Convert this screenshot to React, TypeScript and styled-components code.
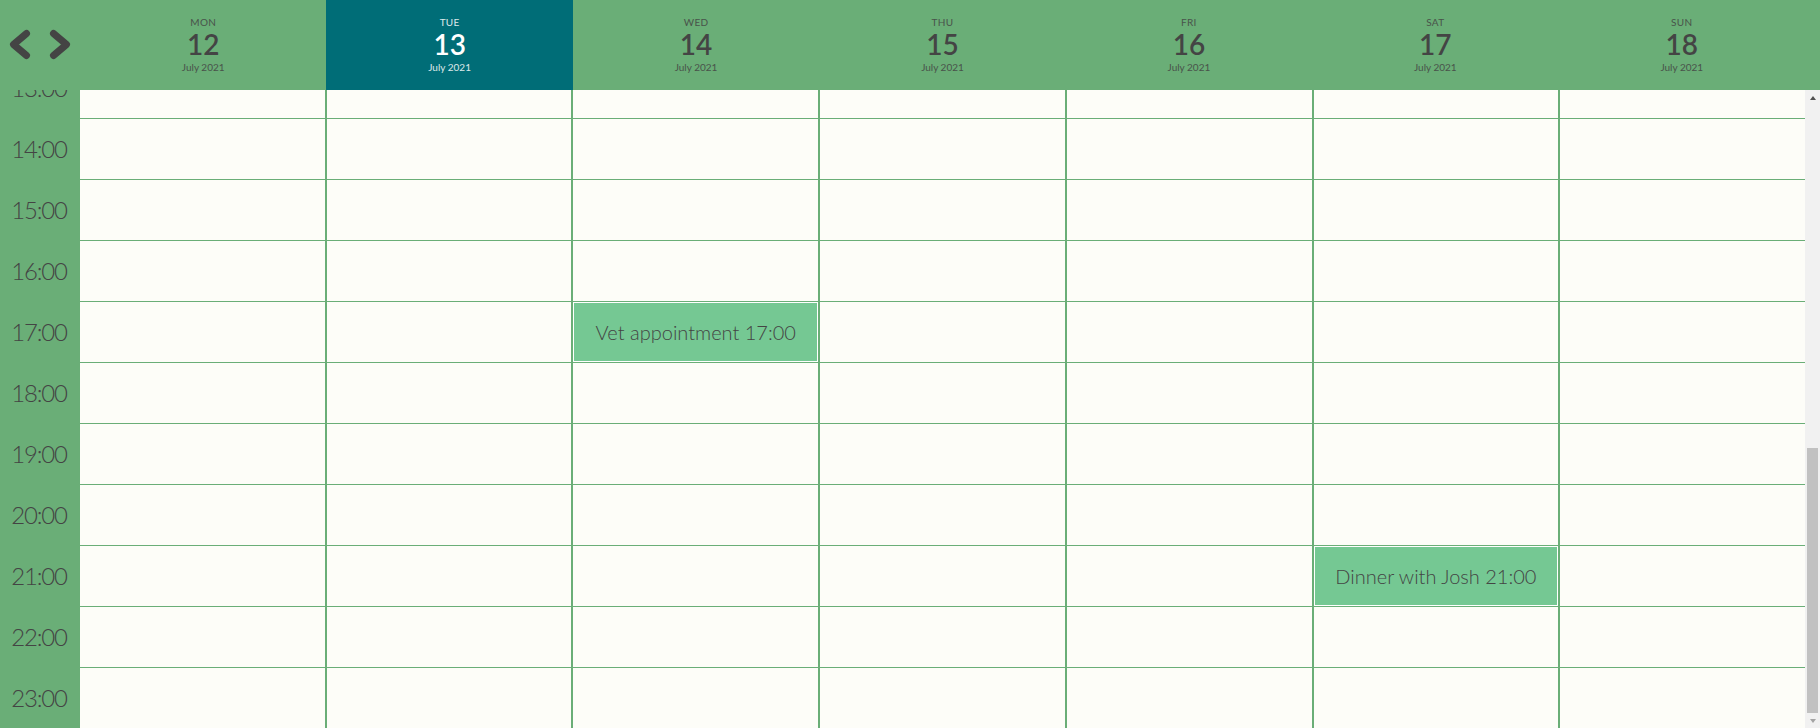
import React, { useLayoutEffect, useRef, useState } from "react";
import styled, { createGlobalStyle } from "styled-components";

const GREEN = "#6aae77";
const TEAL = "#006d77";
const CELL_BG = "#fdfdf8";
const EVENT_BG = "#75c893";
const TEXT = "#444444";

const GlobalStyle = createGlobalStyle`
  html, body { margin: 0; padding: 0; height: 100%; overflow: hidden; }
  body { font-family: Lato, "Open Sans", sans-serif; color: ${TEXT}; }
  #root { height: 100%; }
`;

const Page = styled.div`
  height: 100vh;
  display: flex;
  flex-direction: column;
  background: ${GREEN};
`;

const Header = styled.header`
  height: 90px;
  flex: 0 0 90px;
  display: flex;
  padding-right: 15px;
  background: ${GREEN};
`;

const NavCell = styled.div`
  width: 80px;
  flex: 0 0 80px;
`;

const NavSvg = styled.svg`
  display: block;
`;

const DayHeader = styled.div<{ $active?: boolean }>`
  flex: 1 1 0;
  min-width: 0;
  display: flex;
  flex-direction: column;
  align-items: center;
  padding-top: 16px;
  box-sizing: border-box;
  background: ${(p) => (p.$active ? TEAL : "transparent")};
  color: ${(p) => (p.$active ? "#ffffff" : TEXT)};
`;

const DayName = styled.div`
  font-size: 10px;
  line-height: 13px;
  letter-spacing: 0.3px;
  opacity: 0.85;
`;

const DayNumber = styled.div`
  font-size: 28px;
  line-height: 30px;
  font-weight: 600;
`;

const DayMonth = styled.div`
  font-size: 10px;
  line-height: 16px;
  opacity: 0.85;
`;

const Body = styled.div`
  flex: 1 1 auto;
  min-height: 0;
  display: flex;
`;

const ScrollArea = styled.div`
  flex: 1 1 auto;
  min-width: 0;
  overflow: hidden;
`;

const Content = styled.div`
  display: flex;
  background: ${CELL_BG};
`;

const TimeColumn = styled.div`
  width: 80px;
  flex: 0 0 80px;
  background: ${GREEN};
`;

const TimeSlot = styled.div`
  height: 61px;
  display: flex;
  align-items: center;
  justify-content: center;
  font-size: 24px;
  font-weight: 300;
  letter-spacing: -1.2px;
  color: ${TEXT};
  padding-right: 2px;
  box-sizing: border-box;
`;

const DayGrid = styled.div`
  flex: 1 1 auto;
  display: grid;
  grid-template-columns: repeat(7, minmax(0, 1fr));
  column-gap: 2px;
  background: ${GREEN};
`;

const DayColumn = styled.div`
  background: ${CELL_BG};
`;

const Slot = styled.div`
  height: 61px;
  border-top: 1px solid ${GREEN};
  box-sizing: border-box;
  display: flex;
`;

const Event = styled.div`
  flex: 1 1 auto;
  border: 1px solid #ffffff;
  background: ${EVENT_BG};
  display: flex;
  align-items: center;
  justify-content: center;
  font-size: 20px;
  font-weight: 300;
  color: ${TEXT};
  white-space: nowrap;
`;

const Scrollbar = styled.div`
  width: 15px;
  flex: 0 0 15px;
  display: flex;
  flex-direction: column;
  background: #f1f1f1;
`;

const ArrowButton = styled.div<{ $down?: boolean; $disabled?: boolean }>`
  height: 15px;
  flex: 0 0 15px;
  display: flex;
  align-items: center;
  justify-content: center;
  &::before {
    content: "";
    width: 0;
    height: 0;
    border-left: 3.5px solid transparent;
    border-right: 3.5px solid transparent;
    ${(p) =>
      p.$down
        ? `border-top: 4px solid ${p.$disabled ? "#a3a3a3" : "#505050"};`
        : `border-bottom: 4px solid ${p.$disabled ? "#a3a3a3" : "#505050"};`}
  }
`;

const Track = styled.div`
  flex: 1 1 auto;
  display: flex;
  flex-direction: column;
  justify-content: flex-end;
  align-items: center;
`;

const Thumb = styled.div`
  width: 11px;
  background: #c1c1c1;
`;

const days = [
  { name: "MON", num: 12 },
  { name: "TUE", num: 13, active: true },
  { name: "WED", num: 14 },
  { name: "THU", num: 15 },
  { name: "FRI", num: 16 },
  { name: "SAT", num: 17 },
  { name: "SUN", num: 18 },
];

const events: Record<string, string> = {
  "2-17": "Vet appointment 17:00",
  "5-21": "Dinner with Josh 21:00",
};

const hours = Array.from({ length: 24 }, (_, i) => i);
const fmt = (h: number) => `${String(h).padStart(2, "0")}:00`;

export default function App() {
  const areaRef = useRef<HTMLDivElement>(null);
  const [thumb, setThumb] = useState(265);

  useLayoutEffect(() => {
    const el = areaRef.current;
    if (!el) return;
    el.scrollTop = el.scrollHeight;
    const track = el.clientHeight - 30;
    setThumb(Math.round((track * el.clientHeight) / el.scrollHeight));
  }, []);

  return (
    <Page>
      <GlobalStyle />
      <Header>
        <NavCell>
          <NavSvg width="80" height="90" viewBox="0 0 80 90">
            <polyline
              points="26.5,33.5 13.5,44.5 26.5,55.5"
              fill="none"
              stroke={TEXT}
              strokeWidth="7"
              strokeLinecap="round"
              strokeLinejoin="round"
            />
            <polyline
              points="53.5,33.5 66.5,44.5 53.5,55.5"
              fill="none"
              stroke={TEXT}
              strokeWidth="7"
              strokeLinecap="round"
              strokeLinejoin="round"
            />
          </NavSvg>
        </NavCell>
        {days.map((d) => (
          <DayHeader key={d.name} $active={d.active}>
            <DayName>{d.name}</DayName>
            <DayNumber>{d.num}</DayNumber>
            <DayMonth>July 2021</DayMonth>
          </DayHeader>
        ))}
      </Header>
      <Body>
        <ScrollArea ref={areaRef}>
          <Content>
            <TimeColumn>
              {hours.map((h) => (
                <TimeSlot key={h}>{fmt(h)}</TimeSlot>
              ))}
            </TimeColumn>
            <DayGrid>
              {days.map((d, di) => (
                <DayColumn key={d.name}>
                  {hours.map((h) => {
                    const ev = events[`${di}-${h}`];
                    return <Slot key={h}>{ev && <Event>{ev}</Event>}</Slot>;
                  })}
                </DayColumn>
              ))}
            </DayGrid>
          </Content>
        </ScrollArea>
        <Scrollbar>
          <ArrowButton />
          <Track>
            <Thumb style={{ height: thumb }} />
          </Track>
          <ArrowButton $down $disabled />
        </Scrollbar>
      </Body>
    </Page>
  );
}
